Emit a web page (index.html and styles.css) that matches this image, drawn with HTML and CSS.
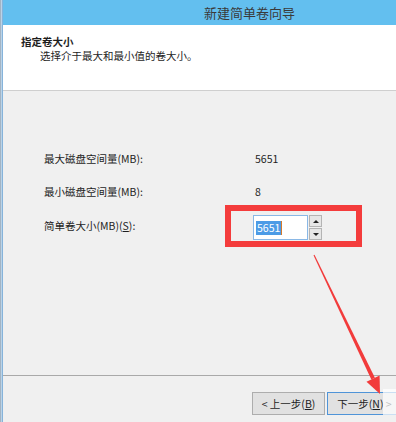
FILE: index.html
```html
<!DOCTYPE html>
<html lang="zh-CN">
  <head>
    <meta charset="utf-8" />
    <title>新建简单卷向导</title>
    <link rel="stylesheet" href="styles.css">
  </head>
  <body>
    <div class="window">
      <div class="edge"></div>
      <div class="dialog">
        <div class="titlebar">新建简单卷向导</div>
        <div class="header">
          <div class="header-title">指定卷大小</div>
          <div class="header-sub">选择介于最大和最小值的卷大小。</div>
        </div>
        <div class="body">
          <div class="row">
            <div class="label">最大磁盘空间量(MB):</div>
            <div class="value">5651</div>
          </div>
          <div class="row">
            <div class="label">最小磁盘空间量(MB):</div>
            <div class="value">8</div>
          </div>
          <div class="row row-spin">
            <div class="label">简单卷大小(MB)(<u>S</u>):</div>
            <div class="spin">
              <div class="spin-input"><span class="selected">5651</span><span class="caret"></span></div>
              <div class="spin-buttons">
                <div class="spin-btn"><span class="tri-up"></span></div>
                <div class="spin-btn"><span class="tri-down"></span></div>
              </div>
            </div>
          </div>
        </div>
        <div class="footer">
          <button class="btn">&lt; 上一步(<u>B</u>)</button>
          <button class="btn btn-default">下一步(<u>N</u>) &gt;</button>
        </div>
      </div>
    </div>

    <!-- annotation layer -->
    <div class="mark-box"></div>
    <svg class="mark-arrow" width="396" height="422" viewBox="0 0 396 422">
      <polygon fill="#f23b3b" points="314.5,254.8 313.5,255.2 371.3,379.5 374.9,377.7" />
      <polygon fill="#f23b3b" points="380,394 366.5,381.8 379.6,375.4" />
    </svg>
    <div class="watermark"></div>
  </body>
</html>
```

FILE: styles.css
```css
* {
  margin: 0;
  padding: 0;
  box-sizing: border-box;
}
body {
  width: 396px;
  height: 422px;
  overflow: hidden;
  font-family: "Noto Sans CJK SC", "Noto Sans", sans-serif;
  font-size: 10.5px;
  color: #1e1e1e;
  background-color: #f0f0f0;
}
.window {
  display: flex;
  height: 422px;
}
.edge {
  width: 3px;
  flex-shrink: 0;
  background: linear-gradient(to right, #a3b4c4 0 1px, #b9d3e8 1px 2px, #86b3da 2px);
}
.dialog {
  flex: 1;
  min-width: 0;
  display: flex;
  flex-direction: column;
  background-color: #f0f0f0;
}
.titlebar {
  height: 25px;
  line-height: 25px;
  background-color: #63bfef;
  color: #3a3a3a;
  font-size: 13px;
  padding-left: 201px;
}
.header {
  height: 66px;
  background-color: #ffffff;
  border-bottom: 1px solid #cfcfcf;
  padding: 10px 0 0 18px;
  line-height: 14px;
}
.header-title {
  font-weight: bold;
}
.header-sub {
  margin-left: 19px;
}
.body {
  flex: 1;
  padding: 61px 0 0 41px;
  line-height: 14px;
}
.row {
  display: flex;
  align-items: center;
  height: 14px;
  margin-bottom: 19px;
}
.row:nth-child(2) {
  margin-bottom: 16px;
}
.row-spin {
  height: 25px;
  margin-bottom: 0;
}
.row-spin .label {
  margin-top: -3px;
}
.label {
  width: 209px;
}
.value {
  padding-left: 2px;
}
.spin {
  display: flex;
  height: 25px;
}
.spin-input {
  width: 55px;
  height: 25px;
  background-color: #ffffff;
  border: 1px solid #8ab8e6;
  display: flex;
  align-items: center;
  padding-left: 2px;
}
.selected {
  background-color: #4c9be6;
  color: #ffffff;
  line-height: 14px;
  padding: 0 1px;
}
.caret {
  width: 1px;
  height: 14px;
  background-color: #d57a2c;
}
.spin-buttons {
  width: 14px;
  display: flex;
  flex-direction: column;
  gap: 1px;
  padding: 0 0 0 1px;
}
.spin-btn {
  flex: 1;
  background-color: #e6e6e6;
  border: 1px solid #b4b4b4;
  display: flex;
  align-items: center;
  justify-content: center;
}
.tri-up,
.tri-down {
  width: 0;
  height: 0;
  border-left: 3px solid transparent;
  border-right: 3px solid transparent;
}
.tri-up {
  border-bottom: 3px solid #222;
}
.tri-down {
  border-top: 3px solid #222;
}
.footer {
  height: 47px;
  border-top: 1px solid #a9a9a9;
  display: flex;
  gap: 2px;
  padding: 16px 0 0 249px;
  overflow: hidden;
}
.btn {
  width: 73px;
  height: 23px;
  flex-shrink: 0;
  font-family: inherit;
  font-size: 10.5px;
  color: #1e1e1e;
  background-color: #e1e1e1;
  border: 1px solid #adadad;
}
.btn-default {
  width: 75px;
  border-color: #4f94d8;
}
.mark-box {
  position: absolute;
  left: 225px;
  top: 205px;
  width: 137px;
  height: 42px;
  border: 6px solid #f43c3c;
}
.mark-arrow {
  position: absolute;
  left: 0;
  top: 0;
}
.watermark {
  position: absolute;
  left: 383px;
  top: 389px;
  width: 16px;
  height: 26px;
  background-color: rgba(255, 255, 255, 0.7);
}
```
